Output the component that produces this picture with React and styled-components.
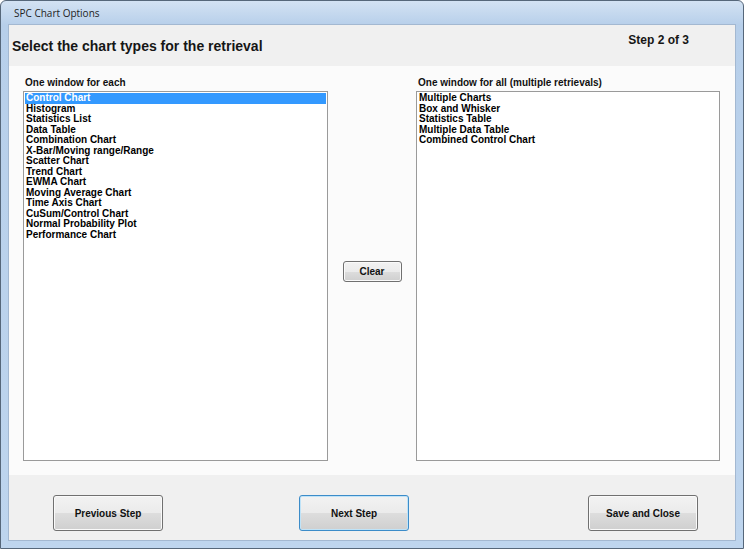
import React from "react";
import styled, { createGlobalStyle } from "styled-components";

const Global = createGlobalStyle`
  html, body { margin: 0; padding: 0; background: #ffffff; }
  body { font-family: "Liberation Sans", Arial, sans-serif; }
  * { box-sizing: border-box; }
`;

const Window = styled.div`
  width: 744px;
  height: 549px;
  display: flex;
  flex-direction: column;
  border: 1px solid #56677a;
  border-radius: 6px 6px 0 0;
  background: linear-gradient(to bottom, #d3e2f3 0px, #b7cfea 24px, #bed5ee 100%);
  padding: 0 7px 7px 7px;
  overflow: hidden;
`;

const TitleBar = styled.div`
  height: 23px;
  display: flex;
  align-items: center;
  padding-left: 6px;
  font-family: "Open Sans", "Liberation Sans", sans-serif;
  font-size: 10px;
  color: #1e1e1e;
  flex-shrink: 0;
`;

const Client = styled.div`
  flex: 1;
  display: flex;
  flex-direction: column;
  border: 1px solid #a3b8d1;
  background: #fbfbfb;
`;

const Header = styled.div`
  height: 41px;
  background: #f0f0f0;
  display: flex;
  justify-content: space-between;
  align-items: flex-start;
  padding: 0 46px 0 3px;
  flex-shrink: 0;
`;

const Heading = styled.h1`
  margin: 13px 0 0 0;
  font-size: 14px;
  font-weight: bold;
  color: #161616;
`;

const Step = styled.div`
  margin-top: 8px;
  font-size: 12px;
  font-weight: bold;
  color: #161616;
`;

const Body = styled.div`
  flex: 1;
  display: flex;
  padding: 11px 15px 14px 14px;
`;

const Column = styled.div`
  width: ${(p) => p.$w}px;
  display: flex;
  flex-direction: column;
`;

const Label = styled.div`
  font-size: 10px;
  font-weight: bold;
  color: #111;
  height: 14px;
  line-height: 12px;
  padding-left: 2px;
`;

const ListBox = styled.ul`
  flex: 1;
  list-style: none;
  margin: 0;
  padding: 1px;
  background: #ffffff;
  border: 1px solid #9a9a9a;
`;

const Item = styled.li`
  height: 10.5px;
  line-height: 10.5px;
  font-size: 10px;
  font-weight: bold;
  padding-left: 1px;
  color: ${(p) => (p.$selected ? "#ffffff" : "#000000")};
  background: ${(p) => (p.$selected ? "#3399ff" : "transparent")};
  white-space: nowrap;
`;

const Middle = styled.div`
  flex: 1;
  display: flex;
  align-items: center;
  justify-content: center;
  padding-top: 4px;
`;

const Button = styled.button`
  width: ${(p) => p.$w}px;
  height: ${(p) => p.$h}px;
  margin-left: ${(p) => p.$ml || "0"};
  font-family: "Liberation Sans", Arial, sans-serif;
  font-size: 10px;
  font-weight: bold;
  color: #111;
  border-radius: 3px;
  border: 1px solid ${(p) => (p.$default ? "#3c8cc9" : "#707070")};
  background: linear-gradient(
    to bottom,
    #f2f2f2 0%,
    #ebebeb 50%,
    #dddddd 51%,
    #cfcfcf 100%
  );
  box-shadow: inset 0 0 0 1px ${(p) => (p.$default ? "#bfe3f8" : "#fafafa")};
  padding: 0;
  cursor: default;
`;

const Footer = styled.div`
  height: 65px;
  background: #f0f0f0;
  display: flex;
  align-items: flex-start;
  padding: 20px 37px 0 44px;
  flex-shrink: 0;
`;

const left = [
  "Control Chart",
  "Histogram",
  "Statistics List",
  "Data Table",
  "Combination Chart",
  "X-Bar/Moving range/Range",
  "Scatter Chart",
  "Trend Chart",
  "EWMA Chart",
  "Moving Average Chart",
  "Time Axis Chart",
  "CuSum/Control Chart",
  "Normal Probability Plot",
  "Performance Chart",
];

const right = [
  "Multiple Charts",
  "Box and Whisker",
  "Statistics Table",
  "Multiple Data Table",
  "Combined Control Chart",
];

export default function App() {
  return (
    <>
      <Global />
      <Window>
        <TitleBar>SPC Chart Options</TitleBar>
        <Client>
          <Header>
            <Heading>Select the chart types for the retrieval</Heading>
            <Step>Step 2 of 3</Step>
          </Header>
          <Body>
            <Column $w={305}>
              <Label>One window for each</Label>
              <ListBox>
                {left.map((t, i) => (
                  <Item key={t} $selected={i === 0}>
                    {t}
                  </Item>
                ))}
              </ListBox>
            </Column>
            <Middle>
              <Button $w={59} $h={21}>Clear</Button>
            </Middle>
            <Column $w={304}>
              <Label>One window for all (multiple retrievals)</Label>
              <ListBox>
                {right.map((t) => (
                  <Item key={t}>{t}</Item>
                ))}
              </ListBox>
            </Column>
          </Body>
          <Footer>
            <Button $w={110} $h={36}>Previous Step</Button>
            <Button $w={110} $h={36} $ml="136px" $default>
              Next Step
            </Button>
            <Button $w={110} $h={36} $ml="auto">
              Save and Close
            </Button>
          </Footer>
        </Client>
      </Window>
    </>
  );
}
